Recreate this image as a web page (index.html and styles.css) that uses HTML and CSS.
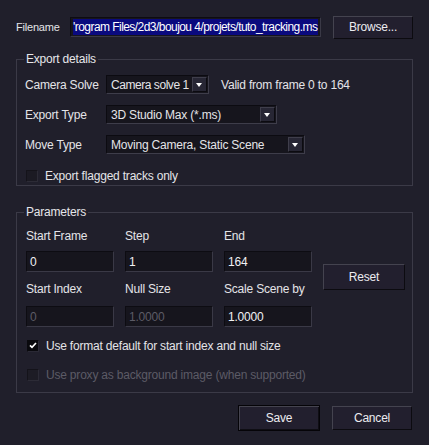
FILE: index.html
```html
<!DOCTYPE html>
<html>
<head>
<meta charset="utf-8">
<link rel="stylesheet" href="styles.css">
</head>
<body>
<div class="dialog">
  <div class="file-row">
    <span class="file-label">Filename</span>
    <div class="field file-field"><span class="sel">'rogram Files/2d3/boujou 4/projets/tuto_tracking.ms</span></div>
    <div class="btn browse">Browse...</div>
  </div>

  <fieldset class="group export">
    <legend>Export details</legend>
    <div class="row r1">
      <span class="lbl">Camera Solve</span>
      <div class="combo c1"><span class="ctext">Camera solve 1</span><span class="arrow"></span></div>
      <span class="valid">Valid from frame 0 to 164</span>
    </div>
    <div class="row r2">
      <span class="lbl">Export Type</span>
      <div class="combo c2"><span class="ctext">3D Studio Max (*.ms)</span><span class="arrow"></span></div>
    </div>
    <div class="row r3">
      <span class="lbl">Move Type</span>
      <div class="combo c3"><span class="ctext">Moving Camera, Static Scene</span><span class="arrow"></span></div>
    </div>
    <div class="check-row r4">
      <span class="box"></span>
      <span>Export flagged tracks only</span>
    </div>
  </fieldset>

  <fieldset class="group params">
    <legend>Parameters</legend>
    <div class="grid">
      <span class="plbl">Start Frame</span>
      <span class="plbl">Step</span>
      <span class="plbl">End</span>
      <span class="spacer"></span>
      <div class="field num">0</div>
      <div class="field num">1</div>
      <div class="field num">164</div>
      <div class="btn reset">Reset</div>
      <span class="plbl low">Start Index</span>
      <span class="plbl low">Null Size</span>
      <span class="plbl low">Scale Scene by</span>
      <div class="field num disabled">0</div>
      <div class="field num disabled">1.0000</div>
      <div class="field num">1.0000</div>
    </div>
    <div class="check-row c-first">
      <span class="box checked"><svg viewBox="0 0 11 11" width="11" height="11"><path d="M2.2 5.4 L4.4 7.6 L8.8 2.8" fill="none" stroke="#ffffff" stroke-width="1.8"/></svg></span>
      <span>Use format default for start index and null size</span>
    </div>
    <div class="check-row c-second disabled-text">
      <span class="box"></span>
      <span>Use proxy as background image (when supported)</span>
    </div>
  </fieldset>

  <div class="footer">
    <div class="btn default">Save</div>
    <div class="btn">Cancel</div>
  </div>
</div>
</body>
</html>
```

FILE: styles.css
```css
html, body {
  margin: 0;
  padding: 0;
  background: #201f2b;
}
body {
  font-family: "Liberation Sans", Arial, sans-serif;
  font-size: 11px;
  letter-spacing: -0.2px;
  color: #e4e4e8;
  width: 429px;
  height: 445px;
  overflow: hidden;
  white-space: nowrap;
}
.dialog {
  padding: 16px 16px 0 16px;
}
.file-row {
  display: flex;
  align-items: center;
  height: 22px;
}
.file-label {
  width: 54px;
}
.field {
  box-sizing: border-box;
  background: #16151d;
  border: 1px solid;
  border-color: #0d0c12 #3a3946 #3a3946 #0d0c12;
  height: 20px;
  display: flex;
  align-items: center;
  padding: 0 3px;
  overflow: hidden;
}
.file-field {
  width: 251px;
  padding: 0 2px;
}
.sel {
  background: #0a0a7e;
  color: #ffffff;
  font-size: 12px;
  letter-spacing: -0.55px;
  line-height: 16px;
  padding-right: 1px;
}
.btn {
  box-sizing: border-box;
  display: flex;
  align-items: center;
  justify-content: center;
  background: #221f2e;
  border: 1px solid;
  border-color: #44434f #0c0b10 #0c0b10 #44434f;
  width: 80px;
  height: 23px;
  color: #ecebf0;
  font-size: 12px;
}
.browse {
  margin-left: 12px;
}
.group {
  margin: 0;
  padding: 0;
  border: 1px solid #3b3a47;
  min-width: 0;
}
.group legend {
  padding: 0 2px;
  font-size: 12px;
  line-height: 14px;
  color: #e6e6ea;
}
.export {
  margin-top: 14px;
  height: 134px;
  box-sizing: border-box;
  padding: 9px 0 0 8px;
}
.export legend {
  margin-left: -1px;
}
.row {
  display: flex;
  align-items: center;
  height: 19px;
}
.r2 { margin-top: 11px; }
.r3 { margin-top: 11px; }
.lbl {
  width: 81px;
  font-size: 12px;
}
.combo {
  box-sizing: border-box;
  height: 19px;
  background: #16151d;
  border: 1px solid;
  border-color: #0c0b11 #3e3d4a #3e3d4a #0c0b11;
  display: flex;
  align-items: center;
  justify-content: space-between;
  padding: 0 1px 0 4px;
  font-size: 12px;
}
.c1 {
  width: 103px;
  letter-spacing: -0.45px;
}
.c2 { width: 171px; }
.c3 { width: 199px; }
.arrow {
  flex: none;
  width: 15px;
  height: 15px;
  box-sizing: border-box;
  background: #272634;
  border: 1px solid;
  border-color: #3f3e4b #0c0b10 #0c0b10 #3f3e4b;
  position: relative;
}
.arrow::after {
  content: "";
  position: absolute;
  left: 3px;
  top: 5px;
  border-left: 3.5px solid transparent;
  border-right: 3.5px solid transparent;
  border-top: 4px solid #ffffff;
}
.valid {
  margin-left: 12px;
  font-size: 12px;
}
.check-row {
  display: flex;
  align-items: center;
  height: 13px;
  font-size: 12px;
}
.r4 {
  margin-top: 15px;
  padding-left: 1px;
}
.box {
  box-sizing: border-box;
  width: 12px;
  height: 12px;
  background: #1b1a23;
  border: 1px solid;
  border-color: #14131a #2c2b36 #2c2b36 #14131a;
  margin-right: 7px;
  display: flex;
  align-items: center;
  justify-content: center;
}
.box.checked {
  background: #09090d;
  border-color: #09090d #2a2935 #2a2935 #09090d;
}
.box svg {
  display: block;
}
.params {
  margin-top: 19px;
  height: 188px;
  box-sizing: border-box;
  padding: 10px 0 0 9px;
}
.params legend {
  margin-left: -2px;
}
.grid {
  display: grid;
  grid-template-columns: 88px 88px 88px 82px;
  grid-template-rows: 22px 21px 34px 21px;
  column-gap: 11px;
  align-items: start;
}
.plbl {
  font-size: 12px;
  line-height: 14px;
}
.plbl.low {
  margin-top: 10px;
}
.num {
  font-size: 12px;
  height: 21px;
  color: #f0f0f4;
}
.num.disabled {
  color: #5c5b66;
}
.reset {
  grid-column: 4;
  grid-row: 2 / span 3;
  margin-top: 13px;
  width: 82px;
  height: 26px;
}
.c-first {
  margin-top: 12px;
  padding-left: 1px;
}
.c-second {
  margin-top: 16px;
  padding-left: 1px;
}
.disabled-text {
  color: #5c5b66;
}
.disabled-text .box {
  background: #1d1c25;
}
.footer {
  display: flex;
  justify-content: flex-end;
  gap: 12px;
  margin-top: 12px;
  padding-right: 1px;
}
.footer .btn {
  width: 80px;
  height: 24px;
  margin-top: 1px;
}
.footer .btn.default {
  width: 82px;
  height: 26px;
  margin-top: 0;
  border: 1px solid #050408;
  box-shadow: inset 1px 1px 0 #45444f, inset -1px -1px 0 #0f0e14;
}
```
